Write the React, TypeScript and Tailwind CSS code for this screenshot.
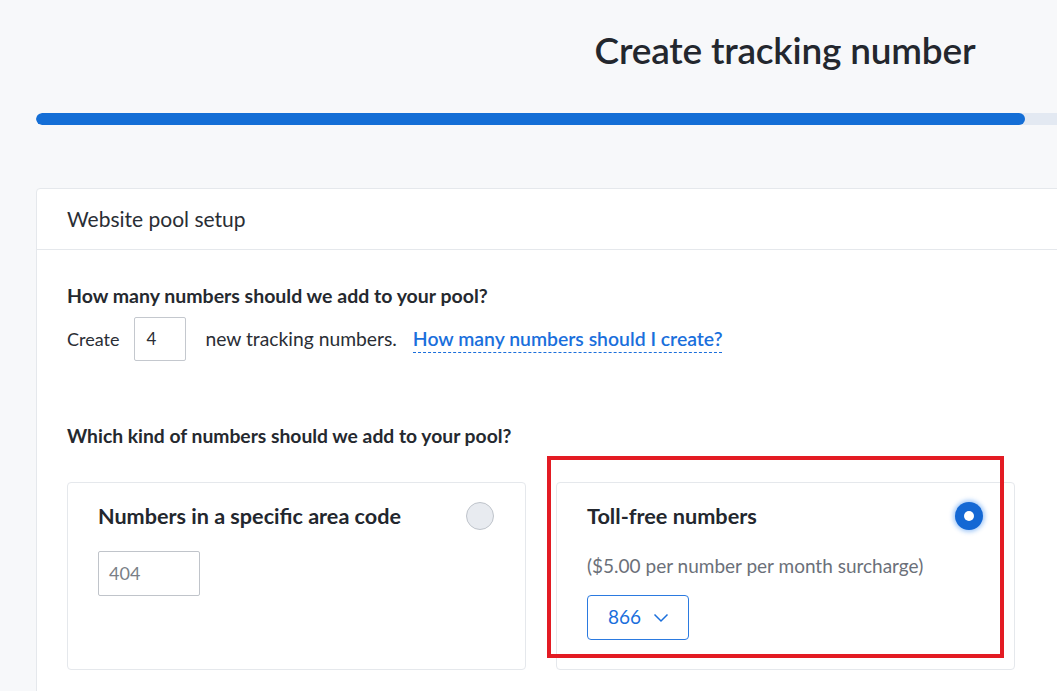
import React from "react";

export default function App() {
  return (
    <div className="w-[1057px] h-[691px] overflow-hidden bg-[#f7f8fa] relative" style={{ fontFamily: "Lato, 'Noto Sans', sans-serif" }}>
      <div className="ml-[36px] w-[1498px]">
        <div className="h-[104px] flex items-center justify-center pb-[4px]">
          <h1 className="text-[37px] font-semibold text-[#23272e] tracking-[-0.2px]">Create tracking number</h1>
        </div>
        <div className="mt-[9px] h-[12px] rounded-full bg-[#e3e9f2] overflow-hidden">
          <div className="h-full w-[989px] rounded-full bg-[#146ed6]" />
        </div>
        <div className="mt-[63px] bg-white border border-[#e5e8ec] rounded-[4px]">
          <div className="h-[61px] flex items-center pl-[30px] border-b border-[#e5e8ec]">
            <span className="text-[21px] text-[#2a2e35]">Website pool setup</span>
          </div>
          <div className="pl-[30px] pt-[33px] pb-[60px]">
            <div className="text-[19.5px] font-bold text-[#25292f] leading-[26px]">How many numbers should we add to your pool?</div>
            <div className="mt-[8px] flex items-center text-[18px] text-[#2a2e35]">
              <span>Create</span>
              <div className="ml-[15px] w-[52px] h-[44px] border border-[#c4c8ce] rounded-[2px] flex items-center pl-[11px] text-[17px]">4</div>
              <span className="ml-[19px] text-[19.3px]">new tracking numbers.</span>
              <span className="ml-[16px] text-[#1a6fdc] font-semibold text-[19.4px] border-b border-dashed border-[#1a6fdc] leading-[24px] pb-[1px] mt-[2px]">How many numbers should I create?</span>
            </div>
            <div className="mt-[62px] text-[19.3px] font-bold text-[#25292f] leading-[26px]">Which kind of numbers should we add to your pool?</div>
            <div className="mt-[33px] flex gap-[30px]">
              <div className="w-[459px] h-[188px] border border-[#e5e8ec] rounded-[4px] pl-[30px] pr-[31px] pt-[17px]">
                <div className="flex items-center justify-between">
                  <span className="text-[21.6px] font-bold text-[#23272e]">Numbers in a specific area code</span>
                  <span className="w-[28px] h-[28px] rounded-full bg-[#e8ebf0] border border-[#bfc4cb]" />
                </div>
                <div className="mt-[19px] w-[102px] h-[45px] border border-[#c0c4ca] rounded-[2px] flex items-center pl-[10px] text-[18px] text-[#7a7f87]">404</div>
              </div>
              <div className="w-[459px] h-[188px] border border-[#e5e8ec] rounded-[4px] pl-[30px] pr-[31px] pt-[17px]">
                <div className="flex items-center justify-between">
                  <span className="text-[21.7px] font-bold text-[#23272e]">Toll-free numbers</span>
                  <span className="w-[28px] h-[28px] rounded-full bg-[#1468d4] flex items-center justify-center shadow-[0_0_4px_2px_rgba(60,140,240,0.45)]">
                    <span className="w-[10px] h-[10px] rounded-full bg-white" />
                  </span>
                </div>
                <div className="mt-[19px] text-[19px] text-[#6b7079]">($5.00 per number per month surcharge)</div>
                <div className="mt-[15px] w-[102px] h-[45px] border border-[#2b7ae0] rounded-[4px] flex items-center pl-[20px] gap-[12px] text-[19px] text-[#1a6fdc]">
                  <span>866</span>
                  <svg width="16" height="10" viewBox="0 0 16 10" fill="none"><path d="M1.5 1.5 L8 8 L14.5 1.5" stroke="#1a6fdc" strokeWidth="1.5" /></svg>
                </div>
              </div>
            </div>
          </div>
        </div>
      </div>
      <div className="absolute left-[547px] top-[456px] w-[457px] h-[202px] border-[4px] border-[#e31b23]" />
    </div>
  );
}
